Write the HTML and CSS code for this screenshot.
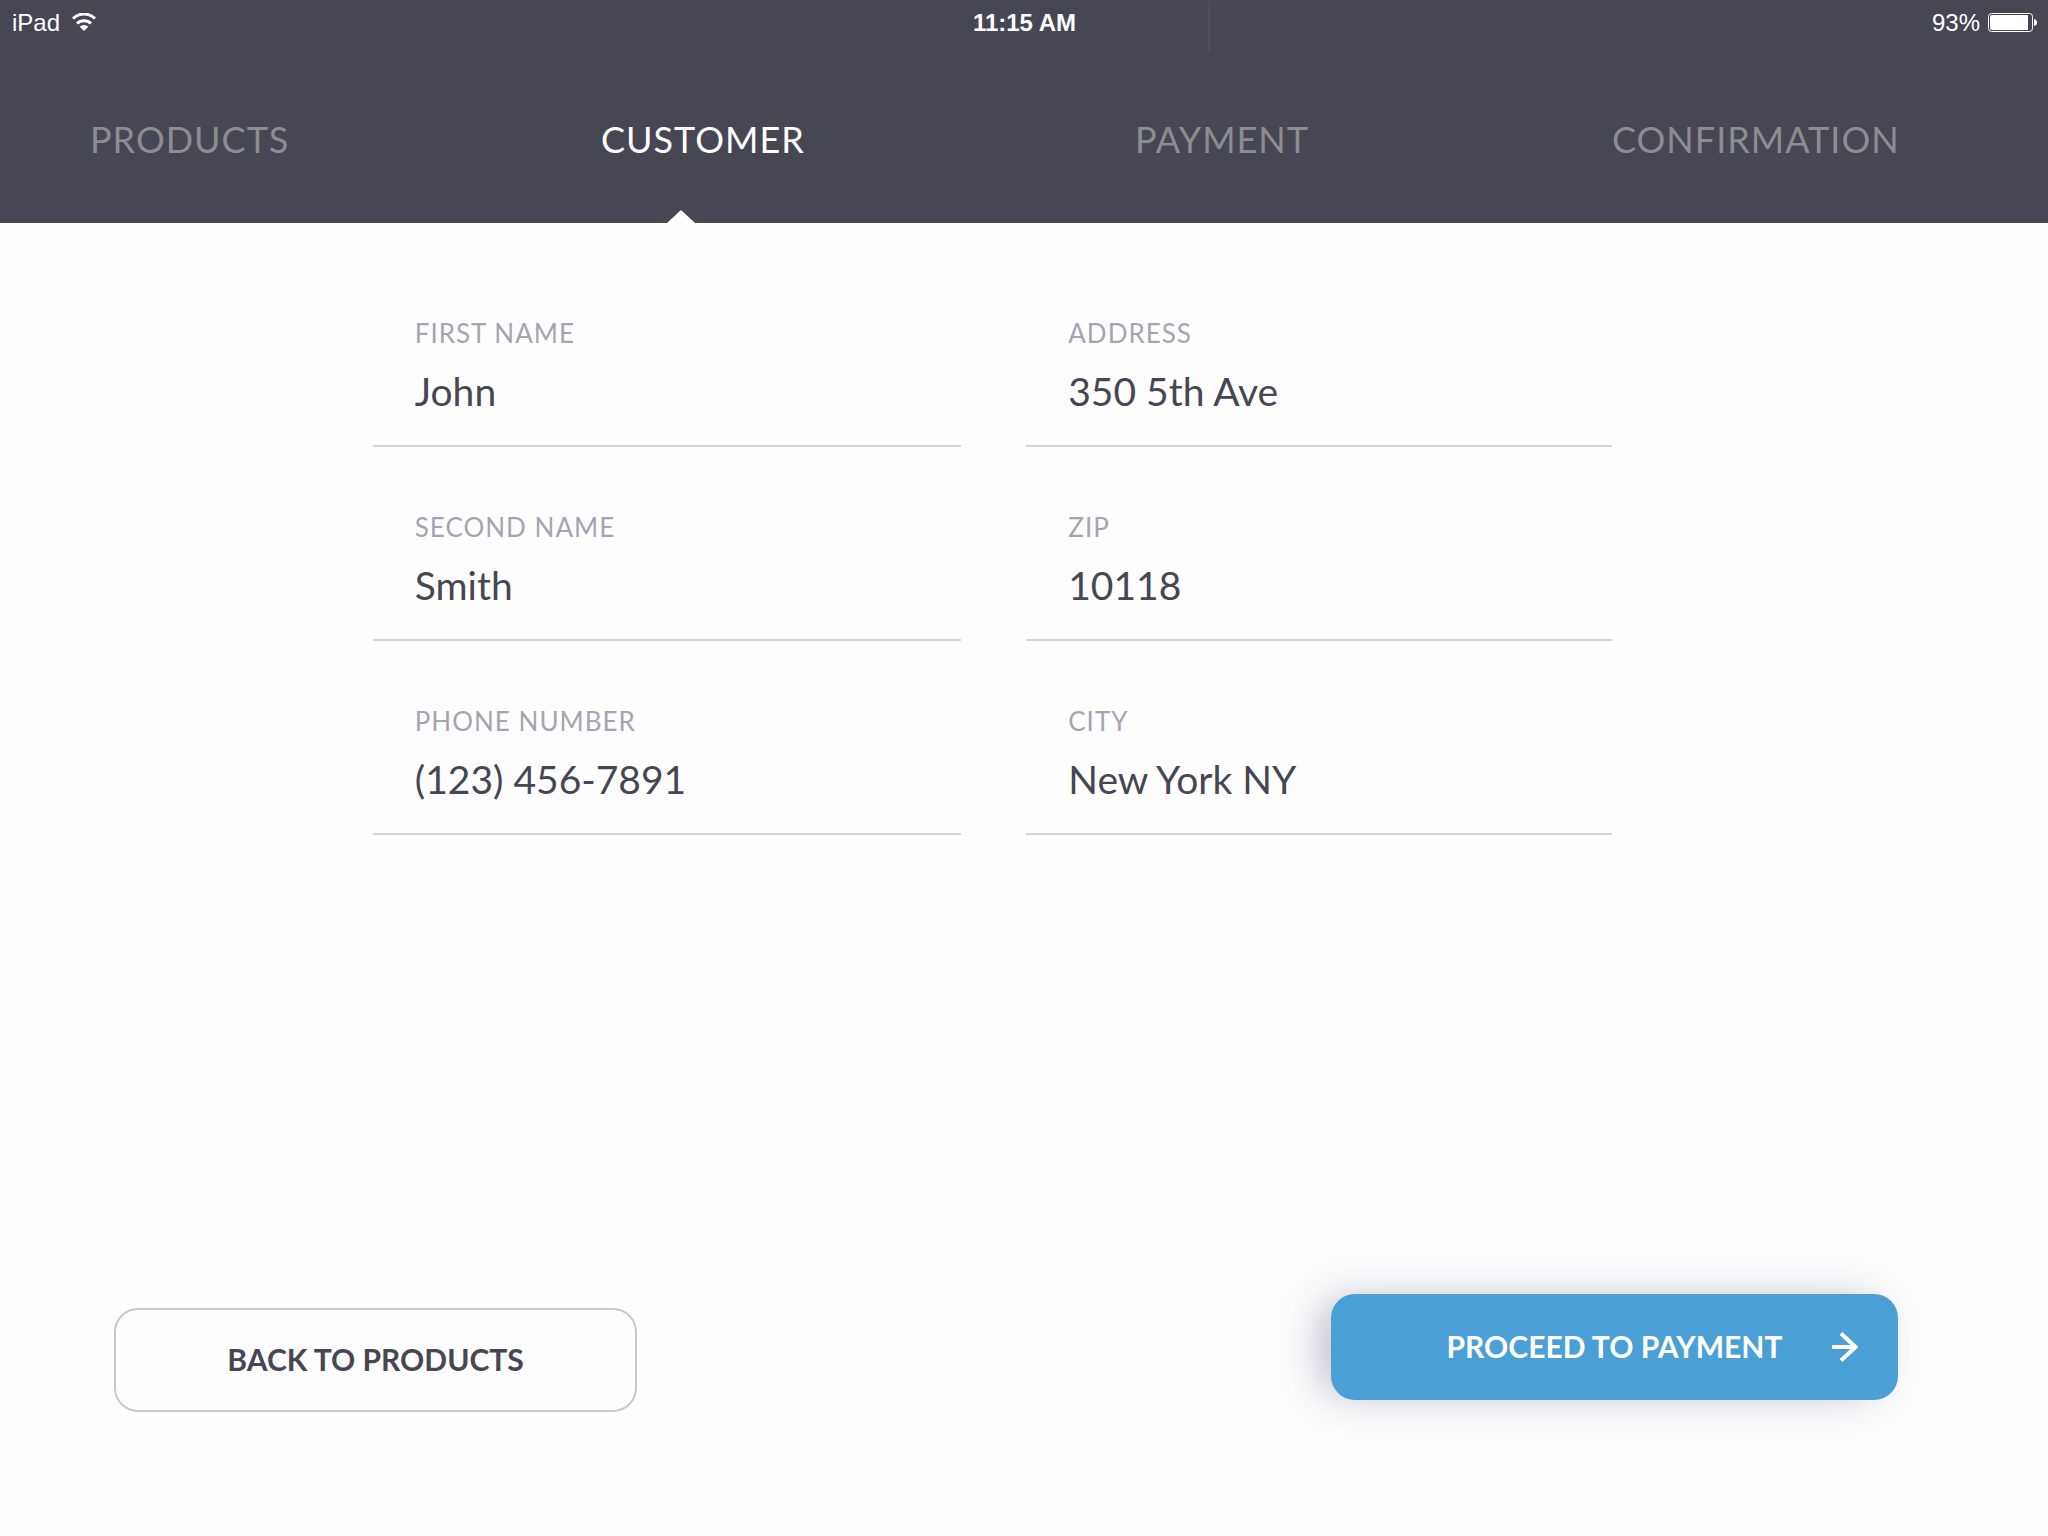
FILE: index.html
```html
<!DOCTYPE html>
<html lang="en">
<head>
<meta charset="utf-8">
<meta name="viewport" content="width=device-width, initial-scale=1">
<title>Customer</title>
<link rel="stylesheet" href="styles.css">
</head>
<body>
<div class="page">
  <header class="header">
    <div class="status">
      <div class="status-left">
        <span class="status-text">iPad</span>
        <svg class="wifi" width="24" height="18" viewBox="0 0 24 18" fill="none" stroke="currentColor" stroke-width="3" aria-hidden="true">
          <path d="M1 5.600A15.500 15.500 0 0 1 23 5.600"/>
          <path d="M5 10.500A10 10 0 0 1 19 10.500"/>
          <path d="M12 18L7.700 13.700A6 6 0 0 1 16.300 13.700Z" fill="currentColor" stroke="none"/>
        </svg>
      </div>
      <time class="status-text clock">11:15 AM</time>
      <div class="status-right">
        <span class="status-text">93%</span>
        <svg width="49" height="19" viewBox="0 0 49 19" aria-hidden="true">
          <rect x="0.500" y="0.500" width="44" height="18" rx="3" fill="none" stroke="currentColor"/>
          <path d="M4 2H40V17H4A2 2 0 0 1 2 15V4A2 2 0 0 1 4 2Z" fill="currentColor"/>
          <path d="M46 6Q49 6.500 49 9.500T46 13Z" fill="currentColor"/>
        </svg>
      </div>
    </div>
    <nav class="tabs" aria-label="Checkout steps">
      <a class="tab" href="#products">PRODUCTS</a>
      <a class="tab tab-active" href="#customer" aria-current="step">CUSTOMER</a>
      <a class="tab" href="#payment">PAYMENT</a>
      <a class="tab" href="#confirmation">CONFIRMATION</a>
    </nav>
  </header>

  <form class="checkout">
    <div class="fields">
      <div class="field"><label for="first-name">FIRST NAME</label><input id="first-name" type="text" value="John"></div>
      <div class="field"><label for="address">ADDRESS</label><input id="address" type="text" value="350 5th Ave"></div>
      <div class="field"><label for="second-name">SECOND NAME</label><input id="second-name" type="text" value="Smith"></div>
      <div class="field"><label for="zip">ZIP</label><input id="zip" type="text" value="10118"></div>
      <div class="field"><label for="phone">PHONE NUMBER</label><input id="phone" type="tel" value="(123) 456-7891"></div>
      <div class="field"><label for="city">CITY</label><input id="city" type="text" value="New York NY"></div>
    </div>
    <div class="actions">
      <button class="button button-back" type="button">BACK TO PRODUCTS</button>
      <button class="button button-next" type="submit">
        <span class="button-label">PROCEED TO PAYMENT</span>
        <svg class="arrow" width="26" height="30" viewBox="0 0 26 30" fill="none" stroke="currentColor" stroke-width="4" aria-hidden="true">
          <path d="M0 15H24"/>
          <path d="M9 1.500L23.500 15L9 28.500"/>
        </svg>
      </button>
    </div>
  </form>
</div>
</body>
</html>
```

FILE: styles.css
```css
* {
  box-sizing: border-box;
}

body {
  margin: 0;
  background: #fefefe;
  color: #474653;
  font-family: Lato, "Open Sans", sans-serif;
}

.page {
  display: flex;
  flex-direction: column;
  min-height: 100vh;
}

.header {
  background: #474653;
  color: #fff;
}

.status {
  position: relative;
  display: grid;
  grid-template-columns: 1fr auto 1fr;
  align-items: center;
  height: 52px;
  padding: 0 11px 8px 12px;
  font: 24px/28px "Liberation Sans", Arial, sans-serif;
}

.status::after {
  content: "";
  position: absolute;
  top: 2px;
  bottom: 1px;
  left: 59%;
  width: 2px;
  background: #504f5c;
}

.status-text {
  padding-top: 2px;
}

.status-left,
.status-right {
  display: flex;
  align-items: center;
  gap: 12px;
}

.status-right {
  justify-content: flex-end;
  gap: 8px;
}

.clock {
  font-weight: bold;
}

.tabs {
  display: grid;
  grid-template-columns: 511fr 534fr 477fr 436fr;
  height: 171px;
  padding-left: 90px;
}

.tab {
  position: relative;
  padding-top: 65px;
  color: #8c8c91;
  font-size: 36px;
  line-height: 44px;
  letter-spacing: 1px;
  text-decoration: none;
}

.tab-active {
  color: #fff;
}

.tab-active::after {
  content: "";
  position: absolute;
  bottom: 0;
  left: 66px;
  width: 28px;
  height: 13px;
  background: #fefefe;
  clip-path: polygon(50% 0, 100% 100%, 0 100%);
}

.checkout {
  display: flex;
  flex: 1;
  flex-direction: column;
  justify-content: space-between;
  gap: 64px;
  padding: 94px 0 124px;
}

.fields {
  display: grid;
  grid-template-columns: 588fr 585fr;
  gap: 64px 65px;
  padding: 0 21.3% 0 18.2%;
}

.field {
  display: flex;
  flex-direction: column;
  border-bottom: 2px solid #d5d5dc;
}

.field label {
  padding-left: 42px;
  color: #a5a4b3;
  font-size: 26px;
  line-height: 32px;
  letter-spacing: 1px;
}

.field input {
  width: 100%;
  height: 96px;
  padding: 18px 0 30px 42px;
  border: 0;
  outline: 0;
  background: none;
  color: inherit;
  font: 39px/48px Lato, "Open Sans", sans-serif;
}

.actions {
  display: flex;
  align-items: flex-start;
  justify-content: space-between;
  padding: 0 150px 0 114px;
}

.button {
  border-radius: 24px;
  font: bold 30px/40px Lato, "Open Sans", sans-serif;
}

.button-back {
  min-width: 523px;
  margin-top: 14px;
  padding: 29px 0 31px;
  border: 2px solid #c9c9cd;
  background: none;
  color: inherit;
}

.button-next {
  display: grid;
  grid-template-columns: 1fr auto 1fr;
  align-items: center;
  min-width: 567px;
  height: 106px;
  padding: 0 40px;
  border: 0;
  background: #4a9fd5;
  box-shadow: -16px 0 44px -6px rgba(60, 70, 110, 0.36);
  color: #fff;
}

.button-label {
  grid-column: 2;
  padding-bottom: 2px;
}

.arrow {
  justify-self: end;
}
```
